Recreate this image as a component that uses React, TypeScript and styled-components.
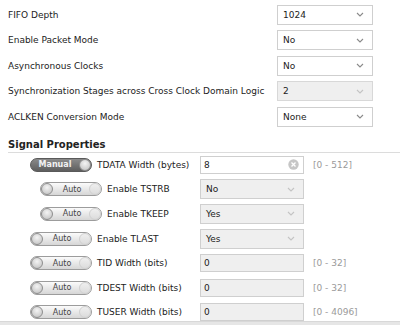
import React from "react";
import styled, { createGlobalStyle } from "styled-components";

const GlobalStyle = createGlobalStyle`
  html, body {
    margin: 0;
    padding: 0;
    background: #ffffff;
  }
  body {
    font-family: "DejaVu Sans", "Liberation Sans", sans-serif;
    font-size: 9px;
    color: #222;
    overflow: hidden;
  }
`;

const Page = styled.div`
  width: 400px;
  height: 325px;
  position: relative;
  display: flex;
  flex-direction: column;
  box-sizing: border-box;
  padding-top: 2px;
`;

// Top configuration rows: label on the left, select at a fixed column
const ConfigRow = styled.div`
  display: grid;
  grid-template-columns: 269px 96px;
  align-items: center;
  height: 25.5px;
  padding-left: 8px;
`;

const Label = styled.span`
  white-space: nowrap;
  color: #222;
`;

const SelectBox = styled.div<{ $disabled?: boolean; $tone?: "white" | "grey" }>`
  height: 20px;
  box-sizing: border-box;
  border: 1px solid ${(p) => (p.$disabled ? "#d8d8d8" : "#cfcfcf")};
  background: ${(p) => (p.$disabled || p.$tone === "grey" ? "#efefef" : "#ffffff")};
  display: flex;
  align-items: center;
  justify-content: space-between;
  padding: 0 8px 0 5px;
  color: #222;
`;

const Chevron: React.FC<{ faded?: boolean }> = ({ faded }) => (
  <svg width="8" height="5" viewBox="0 0 8 5">
    <path
      d="M1 1 L4 4 L7 1"
      fill="none"
      stroke={faded ? "#c4c4c4" : "#8a8a8a"}
      strokeWidth="1.1"
    />
  </svg>
);

const SectionHeader = styled.div`
  margin: 9px 0 0 8px;
  padding-bottom: 1px;
  border-bottom: 1px solid #dcdcdc;
  font-weight: bold;
  font-size: 10px;
  color: #222;
  height: 12px;
  line-height: 12px;
`;

const SignalList = styled.div`
  display: flex;
  flex-direction: column;
`;

const SignalRow = styled.div`
  display: grid;
  grid-template-columns: 200px 104px auto;
  align-items: center;
  height: 24.6px;
`;

const SignalLead = styled.div<{ $indent?: number }>`
  display: flex;
  align-items: center;
  gap: 5px;
  padding-left: ${(p) => p.$indent ?? 30}px;
`;

const Toggle = styled.div<{ $on?: boolean }>`
  position: relative;
  width: 62px;
  height: 14px;
  box-sizing: border-box;
  border-radius: 7px;
  border: 1px solid ${(p) => (p.$on ? "#5a5a5a" : "#9c9c9c")};
  background: ${(p) =>
    p.$on
      ? "linear-gradient(#8a8a8a, #5e5e5e)"
      : "linear-gradient(#fbfbfb, #d6d6d6)"};
  display: flex;
  align-items: center;
  justify-content: center;
  font-size: 8px;
  font-weight: ${(p) => (p.$on ? "bold" : "normal")};
  color: ${(p) => (p.$on ? "#f2f2f2" : "#444")};
  padding-right: ${(p) => (p.$on ? "12px" : "0")};
  padding-left: ${(p) => (p.$on ? "0" : "2px")};
`;

const Knob = styled.span<{ $side: "left" | "right"; $ghost?: boolean }>`
  position: absolute;
  top: 0px;
  ${(p) => (p.$side === "left" ? "left: 0px;" : "right: 0px;")}
  width: 12px;
  height: 12px;
  border-radius: 50%;
  box-sizing: border-box;
  border: 1px solid ${(p) => (p.$ghost ? "#d0d0d0" : "#8e8e8e")};
  background: ${(p) =>
    p.$ghost
      ? "linear-gradient(#efefef, #dcdcdc)"
      : "radial-gradient(circle at 50% 35%, #f4f4f4, #bdbdbd)"};
`;

const ValueInput = styled.div<{ $white?: boolean }>`
  height: 18px;
  box-sizing: border-box;
  border: 1px solid #cfcfcf;
  background: ${(p) => (p.$white ? "#ffffff" : "#efefef")};
  display: flex;
  align-items: center;
  justify-content: space-between;
  padding: 0 4px 0 3px;
`;

const Range = styled.span`
  padding-left: 9px;
  color: #9a9a9a;
`;

const ClearIcon = () => (
  <svg width="11" height="11" viewBox="0 0 11 11">
    <circle cx="5.5" cy="5.5" r="5.2" fill="#c6c6c6" />
    <path d="M3.5 3.5 L7.5 7.5 M7.5 3.5 L3.5 7.5" stroke="#fff" strokeWidth="1.3" />
  </svg>
);

const BottomBar = styled.div`
  position: absolute;
  left: 0;
  right: 0;
  bottom: 0;
  height: 3px;
  background: #e6e6e6;
  border-top: 1px solid #d8d8d8;
`;

const ModeToggle: React.FC<{ manual?: boolean }> = ({ manual }) =>
  manual ? (
    <Toggle $on>
      Manual
      <Knob $side="right" />
    </Toggle>
  ) : (
    <Toggle>
      <Knob $side="left" />
      Auto
      <Knob $side="right" $ghost />
    </Toggle>
  );

const config = [
  { label: "FIFO Depth", value: "1024" },
  { label: "Enable Packet Mode", value: "No" },
  { label: "Asynchronous Clocks", value: "No" },
  { label: "Synchronization Stages across Cross Clock Domain Logic", value: "2", disabled: true },
  { label: "ACLKEN Conversion Mode", value: "None" },
];

type Signal = {
  label: string;
  value: string;
  kind: "input" | "select";
  manual?: boolean;
  indent?: number;
  range?: string;
};

const signals: Signal[] = [
  { label: "TDATA Width (bytes)", value: "8", kind: "input", manual: true, range: "[0 - 512]" },
  { label: "Enable TSTRB", value: "No", kind: "select", indent: 40 },
  { label: "Enable TKEEP", value: "Yes", kind: "select", indent: 40 },
  { label: "Enable TLAST", value: "Yes", kind: "select" },
  { label: "TID Width (bits)", value: "0", kind: "input", range: "[0 - 32]" },
  { label: "TDEST Width (bits)", value: "0", kind: "input", range: "[0 - 32]" },
  { label: "TUSER Width (bits)", value: "0", kind: "input", range: "[0 - 4096]" },
];

export default function App() {
  return (
    <>
      <GlobalStyle />
      <Page>
        {config.map((c) => (
          <ConfigRow key={c.label}>
            <Label>{c.label}</Label>
            <SelectBox $disabled={c.disabled}>
              <span>{c.value}</span>
              <Chevron faded={c.disabled} />
            </SelectBox>
          </ConfigRow>
        ))}

        <SectionHeader>Signal Properties</SectionHeader>

        <SignalList>
          {signals.map((s) => (
            <SignalRow key={s.label}>
              <SignalLead $indent={s.indent}>
                <ModeToggle manual={s.manual} />
                <Label>{s.label}</Label>
              </SignalLead>
              {s.kind === "select" ? (
                <SelectBox $tone="grey">
                  <span>{s.value}</span>
                  <Chevron faded />
                </SelectBox>
              ) : (
                <ValueInput $white={s.manual}>
                  <span>{s.value}</span>
                  {s.manual && <ClearIcon />}
                </ValueInput>
              )}
              {s.range ? <Range>{s.range}</Range> : <span />}
            </SignalRow>
          ))}
        </SignalList>
        <BottomBar />
      </Page>
    </>
  );
}
